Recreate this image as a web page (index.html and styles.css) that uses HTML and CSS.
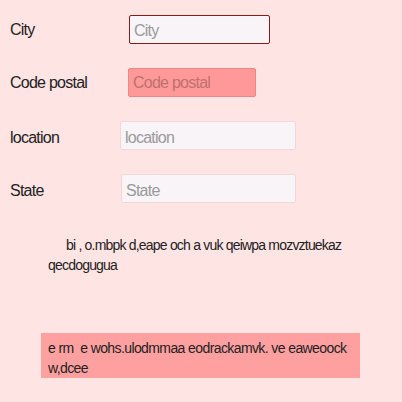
FILE: index.html
```html
<!DOCTYPE html>
<html>
<head>
<meta charset="utf-8">
<link rel="stylesheet" href="styles.css">
</head>
<body>
<div class="form">
  <div class="row">
    <label class="label">City</label>
    <input class="field field-city" placeholder="City">
  </div>
  <div class="row">
    <label class="label">Code postal</label>
    <input class="field field-code" placeholder="Code postal">
  </div>
  <div class="row">
    <label class="label label-low">location</label>
    <input class="field field-loc" placeholder="location">
  </div>
  <div class="row">
    <label class="label label-low">State</label>
    <input class="field field-state" placeholder="State">
  </div>
</div>
<p class="note">bi , o.mbpk d,eape och a vuk qeiwpa mozvztuekaz qecdogugua</p>
<div class="box">e rm&nbsp; e wohs.ulodmmaa eodrackamvk. ve eaweoock w,dcee</div>
</body>
</html>
```
FILE: styles.css
```css
html, body {
  margin: 0;
  padding: 0;
  background: #ffe4e4;
  font-family: "Liberation Sans", Arial, sans-serif;
  color: #222;
}
.form {
  padding: 15px 0 0 10px;
  display: flex;
  flex-direction: column;
  gap: 24px;
}
.row {
  display: flex;
  align-items: center;
  height: 29px;
}
.label {
  font-size: 16px;
  letter-spacing: -0.75px;
  width: 110px;
  flex: none;
  padding-top: 1px;
}
.label-low {
  padding-top: 4px;
}
.field {
  box-sizing: border-box;
  height: 29px;
  font-family: "Liberation Sans", Arial, sans-serif;
  font-size: 16px;
  letter-spacing: -0.75px;
  padding: 0 4px;
  background: #f8f4f8;
  border: 1px solid #f3d6da;
  border-radius: 2px;
  outline: none;
}
.field::placeholder {
  color: #9a9a9a;
}
.field-city {
  margin-left: 9px;
  width: 141px;
  padding-top: 2px;
  border-color: #8b1a1a;
}
.field-code {
  margin-left: 8px;
  width: 128px;
  background: #ff9999;
  border-color: #e88888;
}
.field-code::placeholder {
  color: #c07070;
}
.field-loc {
  margin-left: 0;
  width: 176px;
  padding-top: 5px;
}
.field-state {
  margin-left: 1px;
  width: 175px;
  padding-top: 5px;
}
.note {
  margin: 32px 0 0 48px;
  width: 300px;
  font-size: 14px;
  letter-spacing: -0.8px;
  line-height: 20px;
  text-indent: 18px;
}
.box {
  margin: 58px 0 0 41px;
  width: 319px;
  box-sizing: border-box;
  padding: 5px 6px 0 7px;
  background: #ffa0a0;
  font-size: 14px;
  letter-spacing: -0.6px;
  line-height: 20px;
}
```
